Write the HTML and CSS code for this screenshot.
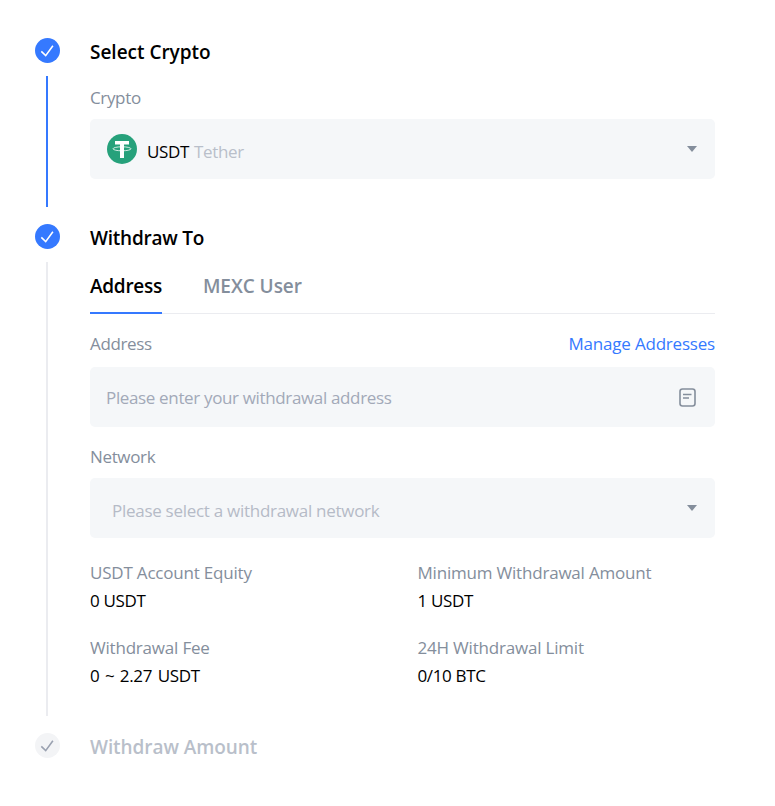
FILE: index.html
```html
<!DOCTYPE html>
<html lang="en">
<head>
    <meta charset="UTF-8">
    <meta name="viewport" content="width=device-width, initial-scale=1.0">
    <title>Withdraw Crypto</title>
    <link rel="stylesheet" href="styles.css">
</head>
<body>

    <div class="withdraw">

        <!-- Step 1: crypto -->
        <div class="step done">
            <div class="marker">
                <svg class="check" viewBox="0 0 25 25"><path d="M6.3 13.400l4.400 4.200 7.200-9.800"/></svg>
                <div class="line"></div>
            </div>
            <div class="content">
                <h2 class="title">Select Crypto</h2>
                <div class="label">Crypto</div>
                <div class="field select">
                    <svg class="coin" viewBox="0 0 30 30">
                        <circle cx="15" cy="15" r="15" fill="#26a17b"/>
                        <path d="M8 7h14v3.600h-5V24h-4V10.600H8z" fill="#fff"/>
                        <ellipse cx="15" cy="14.800" rx="9" ry="2" fill="none" stroke="#fff" stroke-width="0.800"/>
                    </svg>
                    <span class="coin-code">USDT</span>
                    <span class="coin-name">Tether</span>
                    <span class="arrow"></span>
                </div>
            </div>
        </div>

        <!-- Step 2: destination -->
        <div class="step current">
            <div class="marker">
                <svg class="check" viewBox="0 0 25 25"><path d="M6.3 13.400l4.400 4.200 7.200-9.800"/></svg>
                <div class="line"></div>
            </div>
            <div class="content">
                <h2 class="title">Withdraw To</h2>
                <div class="tabs">
                    <div class="tab active">Address</div>
                    <div class="tab">MEXC User</div>
                </div>

                <div class="label address-label">
                    <span class="address">Address</span>
                    <a class="manage">Manage Addresses</a>
                </div>
                <div class="field">
                    <span class="placeholder">Please enter your withdrawal address</span>
                    <svg class="book" viewBox="0 0 17 19">
                        <rect x="1" y="1" width="15" height="17" rx="2.500"/>
                        <path d="M4 6.500h8.500M4 10h6"/>
                    </svg>
                </div>

                <div class="label network-label">Network</div>
                <div class="field network">
                    <span class="placeholder">Please select a withdrawal network</span>
                    <span class="arrow"></span>
                </div>

                <div class="info">
                    <div>
                        <div class="info-name">USDT Account Equity</div>
                        <div class="info-value">0 USDT</div>
                    </div>
                    <div>
                        <div class="info-name">Minimum Withdrawal Amount</div>
                        <div class="info-value">1 USDT</div>
                    </div>
                    <div>
                        <div class="info-name">Withdrawal Fee</div>
                        <div class="info-value fee">0 ~ 2.27 USDT</div>
                    </div>
                    <div>
                        <div class="info-name">24H Withdrawal Limit</div>
                        <div class="info-value">0/10 BTC</div>
                    </div>
                </div>
            </div>
        </div>

        <!-- Step 3: amount -->
        <div class="step waiting">
            <div class="marker">
                <svg class="check" viewBox="0 0 25 25"><path d="M6.3 13.400l4.400 4.200 7.200-9.800"/></svg>
            </div>
            <div class="content">
                <h2 class="title">Withdraw Amount</h2>
            </div>
        </div>

    </div>

</body>
</html>
```
FILE: styles.css
```css
body {
    margin: 0;
    background-color: #fff;
    color: #000;
    font-family: "Open Sans", "Noto Sans", sans-serif;
    font-size: 17px;
    line-height: 28px;
    letter-spacing: -0.35px;
}

.withdraw {
    width: 680px;
    padding: 38px 0 0 35px;
}

/* Steps */
.step {
    display: flex;
}
.marker {
    display: flex;
    flex-direction: column;
    align-items: center;
    width: 25px;
    margin-right: 30px;
}
.check {
    width: 25px;
    height: 25px;
    border-radius: 50%;
    background-color: #3579ff;
    fill: none;
    stroke: #fff;
    stroke-width: 1.6;
}
.line {
    flex: 1;
    width: 2px;
    margin: 13px 1px 17px 0;
    background-color: #ebecf0;
}
.done .line {
    background-color: #3579ff;
}
.waiting .check {
    background-color: #f3f4f6;
    stroke: #9aa1b0;
}
.content {
    flex: 1;
}
.done .content {
    padding-bottom: 45px;
}
.current .content {
    padding-bottom: 43px;
}
.title {
    margin: 0;
    font-size: 19px;
    font-weight: 600;
    letter-spacing: -0.02px;
}
.current .title {
    letter-spacing: -0.22px;
}
.waiting .title {
    color: #b9bfca;
    letter-spacing: -0.07px;
}

/* Fields */
.label {
    margin: 18px 0 7px;
    color: #848e9c;
}
.field {
    display: flex;
    align-items: center;
    box-sizing: border-box;
    height: 60px;
    padding: 0 18px 0 16px;
    border-radius: 5px;
    background-color: #f5f7f9;
}
.select {
    padding-left: 17px;
}
.network {
    padding-left: 22px;
}
.coin {
    width: 30px;
    height: 30px;
    margin-right: 10px;
}
.coin-code {
    margin: 5px 5px 0 0;
    font-weight: 500;
}
.coin-name {
    margin-top: 5px;
    color: #b9bfca;
}
.placeholder {
    margin-top: 2px;
    color: #a2a9b8;
}
.network .placeholder {
    margin-top: 5px;
    color: #b5bbc7;
    letter-spacing: -0.28px;
}
.arrow {
    margin-left: auto;
    border: 5px solid transparent;
    border-top: 6px solid #848e9c;
    border-bottom: 0;
}
.book {
    width: 17px;
    height: 19px;
    margin: 0 1px 0 auto;
    fill: none;
    stroke: #848e9c;
    stroke-width: 1.6;
}

/* Tabs */
.tabs {
    display: flex;
    gap: 41px;
    height: 42px;
    margin-top: 20px;
    box-shadow: inset 0 -1px #ebecf0;
    font-size: 19px;
    font-weight: 600;
    letter-spacing: -0.05px;
}
.tab {
    box-sizing: border-box;
    color: #848e9c;
}
.tab.active {
    border-bottom: 2px solid #3579ff;
    color: #000;
    letter-spacing: -0.28px;
}
.address-label {
    display: flex;
    justify-content: space-between;
    margin: 16px 0 9px;
}
.network-label {
    margin-top: 16px;
}
.manage {
    color: #3579ff;
    letter-spacing: -0.2px;
}

/* Account limits */
.info {
    display: grid;
    grid-template-columns: 1fr 1fr;
    gap: 19px 30px;
    margin-top: 21px;
}
.info-name {
    color: #848e9c;
    letter-spacing: -0.2px;
}
.fee {
    word-spacing: 1.5px;
}
```
